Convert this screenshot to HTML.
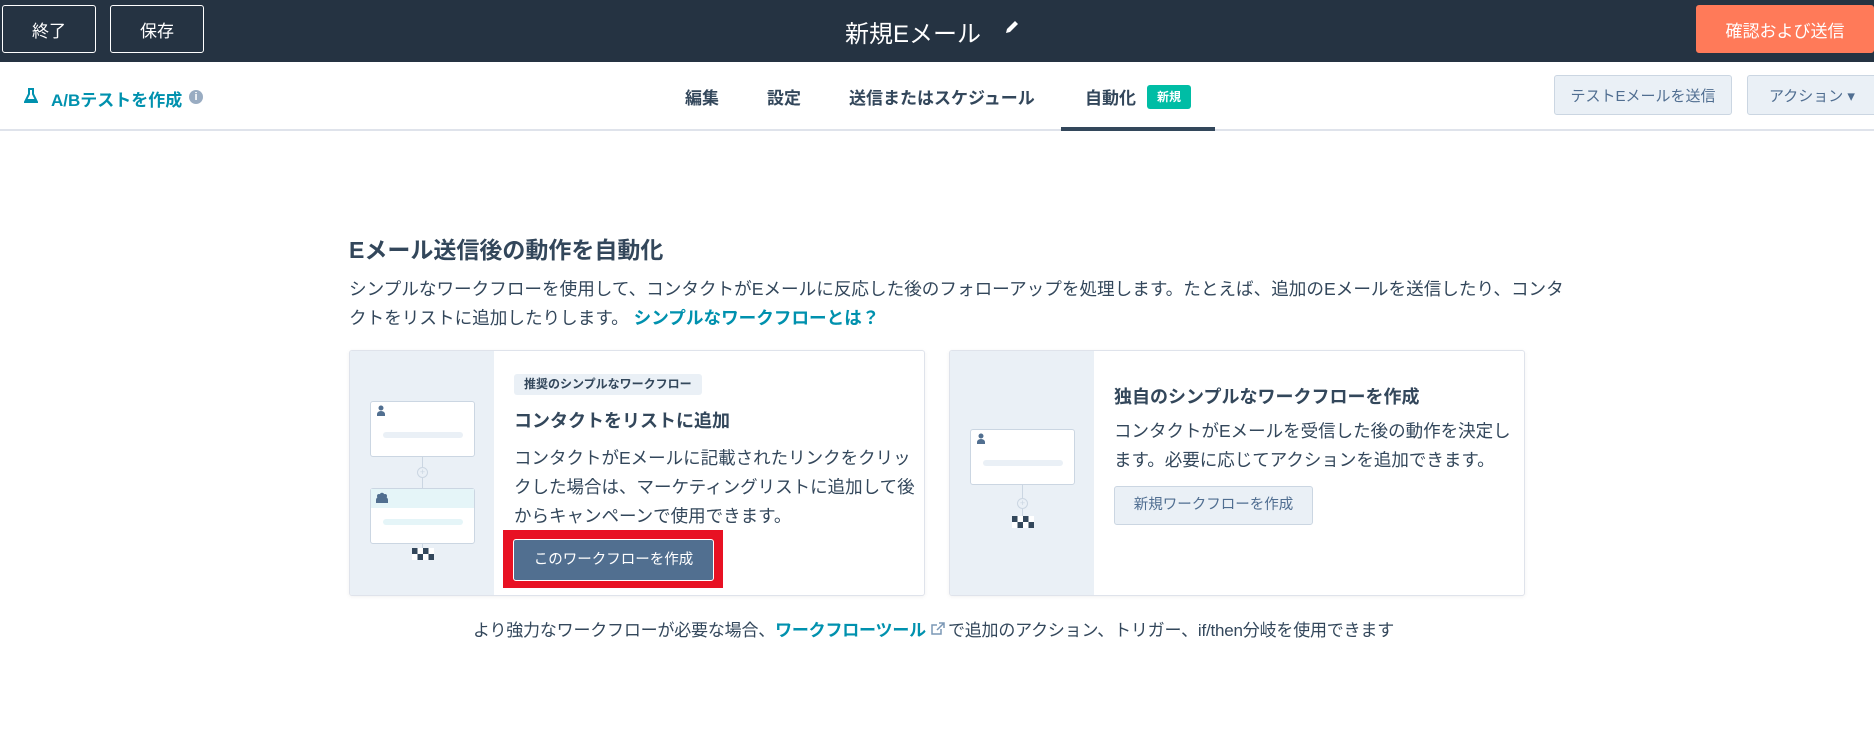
<!DOCTYPE html>
<html><head><meta charset="utf-8">
<style>
*{margin:0;padding:0;box-sizing:border-box}
body{width:1874px;height:756px;background:#fff;position:relative;overflow:hidden;font-family:"Liberation Sans","Noto Sans CJK JP",sans-serif;color:#33475b}
.a{position:absolute;white-space:nowrap}
.top{position:absolute;left:0;top:0;width:1874px;height:62px;background:#253342}
.tb{position:absolute;top:5px;height:48px;border:1px solid #fff;border-radius:3px;color:#fff;font-size:17px;display:flex;align-items:center;justify-content:center;background:#253342}
.nav{position:absolute;left:0;top:62px;width:1874px;height:69px;border-bottom:2px solid #dfe3eb;background:#fff}
.tab{position:absolute;top:22px;font-size:17px;font-weight:bold;color:#33475b}
.gb{position:absolute;top:13px;height:40px;background:#eaf0f6;border:1px solid #cbd6e2;border-radius:3px;font-size:15px;color:#506e91;display:flex;align-items:center;justify-content:center}
.card{position:absolute;top:350px;width:576px;height:246px;border:1px solid #dfe3eb;border-radius:3px;background:#fff;box-shadow:0 1px 4px rgba(0,0,0,.06);overflow:hidden}
.lp{position:absolute;left:0;top:0;width:144px;height:100%;background:#eaf0f6}
.mini{position:absolute;left:20px;width:105px;height:56px;background:#fff;border:1px solid #cbd6e2;border-radius:3px}
.mini .hd{height:19px;position:relative}
.mini .hd svg{position:absolute;left:5px;top:3px}
.mini .bar{position:absolute;left:12px;top:30px;width:80px;height:6px;border-radius:3px;background:#eaf0f6}
.vl{position:absolute;left:72px;width:1px;background:#cbd6e2}
.plus{position:absolute;left:67px;width:11px;height:11px;border:1px solid #cbd6e2;border-radius:50%;background:#eaf0f6;font-size:9px;line-height:9px;text-align:center;color:#cbd6e2}
.chk{position:absolute;left:62px}
.body{font-size:17.5px;line-height:29px;color:#33475b}
</style></head><body>
<div class="top">
 <div class="tb" style="left:2px;width:94px">終了</div>
 <div class="tb" style="left:110px;width:94px">保存</div>
 <div class="a" style="left:845px;top:14px;font-size:24px;color:#fff">新規Eメール</div>
 <svg class="a" style="left:1003px;top:18px" width="18" height="18" viewBox="0 0 18 18"><path d="M3 15l1-4 8-8 3 3-8 8z" fill="#fff"/></svg>
 <div class="tb" style="left:1696px;width:178px;background:#ff7a59;border-color:#ff7a59">確認および送信</div>
</div>
<div class="nav">
 <svg class="a" style="left:24px;top:26px" width="14" height="16" viewBox="0 0 14 16"><path d="M4 1h6M5 1v5L1 14h12L9 6V1" fill="none" stroke="#0091ae" stroke-width="2"/><path d="M3 11h8l2 3H1z" fill="#0091ae"/></svg>
 <div class="a" style="left:51px;top:24px;font-size:17px;font-weight:bold;color:#0091ae">A/Bテストを作成</div>
 <div class="a" style="left:189px;top:28px;width:14px;height:14px;border-radius:50%;background:#99acc2;color:#fff;font-size:11px;text-align:center;line-height:14px;font-weight:bold">i</div>
 <div class="tab" style="left:685px">編集</div>
 <div class="tab" style="left:767px">設定</div>
 <div class="tab" style="left:849px">送信またはスケジュール</div>
 <div class="tab" style="left:1085px">自動化</div>
 <div class="a" style="left:1147px;top:23px;width:44px;height:24px;background:#00bda5;border-radius:3px;color:#fff;font-size:12px;font-weight:bold;text-align:center;line-height:24px">新規</div>
 <div class="a" style="left:1061px;top:65px;width:154px;height:4px;background:#33475b"></div>
 <div class="gb" style="left:1554px;width:178px">テストEメールを送信</div>
 <div class="gb" style="left:1747px;width:130px">アクション ▾</div>
</div>

<div class="a" style="left:349px;top:231px;font-size:23px;font-weight:bold">Eメール送信後の動作を自動化</div>
<div class="a body" style="left:349px;top:275px;font-size:17.6px">シンプルなワークフローを使用して、コンタクトがEメールに反応した後のフォローアップを処理します。たとえば、追加のEメールを送信したり、コンタ</div>
<div class="a body" style="left:349px;top:304px;font-size:17.6px">クトをリストに追加したりします。 <b style="color:#0091ae">シンプルなワークフローとは？</b></div>

<div class="card" style="left:349px">
 <div class="lp">
  <div class="mini" style="top:50px"><div class="hd"><svg width="10" height="11" viewBox="0 0 10 11"><circle cx="5" cy="3" r="2.5" fill="#516f90"/><path d="M1 11v-2a4 3 0 0 1 8 0v2z" fill="#516f90"/></svg></div><div class="bar"></div></div>
  <div class="vl" style="top:106px;height:32px"></div>
  <div class="plus" style="top:116px">+</div>
  <div class="mini" style="top:137px"><div class="hd" style="background:#e5f5f8"><svg width="12" height="11" viewBox="0 0 12 11"><circle cx="3" cy="4" r="2" fill="#516f90"/><circle cx="9" cy="4" r="2" fill="#516f90"/><circle cx="6" cy="3" r="2.3" fill="#516f90"/><path d="M0 11v-3a3 2 0 0 1 12 0v3z" fill="#516f90"/></svg></div><div class="bar" style="background:#e5f5f8"></div></div>
  <div class="vl" style="top:193px;height:6px"></div>
  <svg class="chk" style="top:197px" width="22" height="12" viewBox="0 0 22 12"><rect width="22" height="12" fill="#fff"/><rect x="0" y="0" width="5.5" height="6" fill="#33475b"/><rect x="11" y="0" width="5.5" height="6" fill="#33475b"/><rect x="5.5" y="6" width="5.5" height="6" fill="#33475b"/><rect x="16.5" y="6" width="5.5" height="6" fill="#33475b"/></svg>
 </div>
 <div class="a" style="left:164px;top:23px;height:21px;padding:0 10px;background:#eaf0f6;border-radius:3px;font-size:12px;font-weight:bold;line-height:21px">推奨のシンプルなワークフロー</div>
 <div class="a" style="left:164px;top:56px;font-size:18px;font-weight:bold">コンタクトをリストに追加</div>
 <div class="a body" style="left:164px;top:93px">コンタクトがEメールに記載されたリンクをクリッ<br>クした場合は、マーケティングリストに追加して後<br>からキャンペーンで使用できます。</div>
 <div class="a" style="left:153px;top:179px;width:220px;height:58px;background:#e81123"></div>
 <div class="a" style="left:163px;top:188px;width:201px;height:42px;background:#516f90;border:1px solid #fff;border-radius:3px;color:#fff;font-size:14.5px;text-align:center;line-height:40px">このワークフローを作成</div>
</div>

<div class="card" style="left:949px">
 <div class="lp">
  <div class="mini" style="top:78px"><div class="hd"><svg width="10" height="11" viewBox="0 0 10 11"><circle cx="5" cy="3" r="2.5" fill="#516f90"/><path d="M1 11v-2a4 3 0 0 1 8 0v2z" fill="#516f90"/></svg></div><div class="bar"></div></div>
  <div class="vl" style="top:134px;height:33px"></div>
  <div class="plus" style="top:147px">+</div>
  <svg class="chk" style="top:165px" width="22" height="12" viewBox="0 0 22 12"><rect width="22" height="12" fill="#fff"/><rect x="0" y="0" width="5.5" height="6" fill="#33475b"/><rect x="11" y="0" width="5.5" height="6" fill="#33475b"/><rect x="5.5" y="6" width="5.5" height="6" fill="#33475b"/><rect x="16.5" y="6" width="5.5" height="6" fill="#33475b"/></svg>
 </div>
 <div class="a" style="left:164px;top:32px;font-size:18px;font-weight:bold">独自のシンプルなワークフローを作成</div>
 <div class="a body" style="left:164px;top:66px">コンタクトがEメールを受信した後の動作を決定し<br>ます。必要に応じてアクションを追加できます。</div>
 <div class="a" style="left:164px;top:135px;width:199px;height:39px;background:#eaf0f6;border:1px solid #cbd6e2;border-radius:3px;color:#506e91;font-size:14.5px;text-align:center;line-height:37px">新規ワークフローを作成</div>
</div>

<div class="a" style="left:473px;top:616px;font-size:17px;letter-spacing:-0.2px">より強力なワークフローが必要な場合、<b style="color:#0091ae">ワークフローツール</b><svg width="16" height="14" viewBox="0 0 16 14" style="margin:0 2px 0 4px"><path d="M7 3H2v9h9V7M9 1h5v5M14 1L7 8" fill="none" stroke="#7c98b6" stroke-width="1.5"/></svg>で追加のアクション、トリガー、if/then分岐を使用できます</div>
</body></html>
